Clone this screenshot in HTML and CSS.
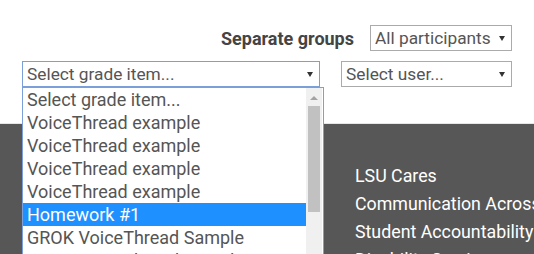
FILE: index.html
```html
<!DOCTYPE html>
<html>
<head>
<meta charset="utf-8">
<link rel="stylesheet" href="styles.css">
</head>
<body>
<div class="top">
  <div class="row row-groups">
    <span class="label">Separate groups</span>
    <div class="sel sel-groups"><span>All participants</span><span class="arrow"></span></div>
  </div>
  <div class="row row-items">
    <div class="grade-wrap">
      <div class="sel sel-grade focus"><span>Select grade item...</span><span class="arrow"></span></div>
      <div class="list">
        <div class="opts">
          <div class="opt">Select grade item...</div>
          <div class="opt">VoiceThread example</div>
          <div class="opt">VoiceThread example</div>
          <div class="opt">VoiceThread example</div>
          <div class="opt">VoiceThread example</div>
          <div class="opt active">Homework #1</div>
          <div class="opt">GROK VoiceThread Sample</div>
          <div class="opt">GROK VoiceThread Sample</div>
        </div>
        <div class="scrollbar">
          <div class="up"></div>
          <div class="thumb"></div>
        </div>
      </div>
    </div>
    <div class="sel sel-user"><span>Select user...</span><span class="arrow"></span></div>
  </div>
</div>
<div class="footer">
  <ul class="links">
    <li>LSU Cares</li>
    <li>Communication Across the Curriculum</li>
    <li>Student Accountability</li>
    <li>Disability Services</li>
  </ul>
</div>
</body>
</html>
```
FILE: styles.css
```css
* { box-sizing: border-box; }
html, body { margin: 0; padding: 0; }
body {
  width: 534px;
  height: 254px;
  overflow: hidden;
  background: #fff;
  font-family: Roboto, "Noto Sans", sans-serif;
  color: #555;
}
.top {
  height: 124px;
  padding-top: 25px;
  border-bottom: 1px solid #e6e6e6;
}
.row { display: flex; align-items: center; }
.row-groups {
  justify-content: flex-end;
  padding-right: 22px;
  gap: 16px;
}
.label {
  font-weight: 700;
  font-size: 18px;
  color: #444;
}
.sel {
  height: 26px;
  border: 1px solid #ababab;
  background: #fff;
  display: flex;
  align-items: center;
  justify-content: space-between;
  padding: 0 6px 0 4px;
  font-size: 17.3px;
  color: #555;
  white-space: nowrap;
  overflow: hidden;
}
.sel-groups { width: 142px; }
.row-items {
  margin-top: 10px;
  padding-left: 22px;
  gap: 21px;
  align-items: flex-start;
}
.grade-wrap { position: relative; }
.sel-grade { width: 298px; }
.sel-grade.focus { border-color: #7b9fd8; }
.sel-user { width: 171px; }
.arrow {
  flex: none;
  width: 0; height: 0;
  border-left: 3.5px solid transparent;
  border-right: 3.5px solid transparent;
  border-top: 5px solid #333;
}
.list {
  position: absolute;
  left: 0;
  top: 26px;
  width: 302px;
  height: 200px;
  border: 1px solid #7b9fd8;
  border-bottom: none;
  background: #fff;
  display: flex;
  z-index: 5;
}
.opts { flex: 1; overflow: hidden; }
.opt {
  height: 23px;
  line-height: 23px;
  padding-left: 4px;
  font-size: 18px;
  color: #555;
  white-space: nowrap;
}
.opt.active { background: #1e90ff; color: #fff; }
.scrollbar {
  width: 16px;
  background: #f0f0f0;
  display: flex;
  flex-direction: column;
  align-items: center;
  margin-right: 1px;
}
.up {
  margin-top: 8px;
  width: 0; height: 0;
  border-left: 4px solid transparent;
  border-right: 4px solid transparent;
  border-bottom: 4px solid #a3a3a3;
}
.thumb {
  margin-top: 6px;
  width: 12px;
  height: 106px;
  background: #c1c1c1;
}
.footer {
  background: #575757;
  height: 130px;
  padding: 40px 0 0 355px;
  overflow: hidden;
}
.links {
  list-style: none;
  margin: 0;
  padding: 0;
  color: #fff;
  font-size: 17.8px;
  white-space: nowrap;
}
.links li { height: 28px; line-height: 24px; }
```
